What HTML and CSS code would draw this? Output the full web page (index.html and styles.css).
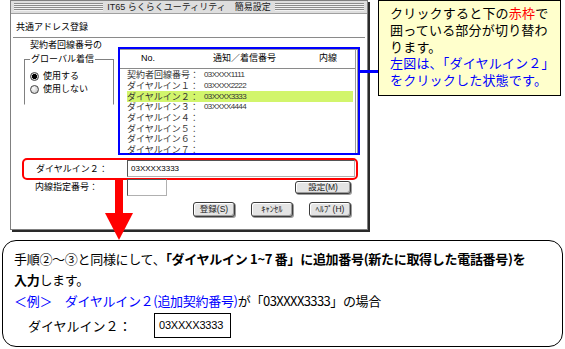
FILE: index.html
```html
<!DOCTYPE html>
<html lang="ja">
<head>
  <meta charset="UTF-8">
  <title>共通アドレス登録</title>
  <link rel="stylesheet" href="styles.css">
</head>
<body>
  <div class="page">
    <div class="top">
      <div class="window">
        <div class="titlebar">
          <span class="stripes"></span>
          <span class="title">IT65 らくらくユーティリティ　簡易設定</span>
          <span class="stripes"></span>
        </div>
        <div class="heading">共通アドレス登録</div>
        <div class="main">
          <div class="global">
            <div class="global-caption">契約者回線番号の</div>
            <div class="group">
              <span class="group-title">グローバル着信</span>
              <div class="radio"><span class="dot on"></span>使用する</div>
              <div class="radio"><span class="dot"></span>使用しない</div>
            </div>
          </div>
          <div class="list-frame">
            <div class="list">
              <div class="list-head">
                <span class="col-no">No.</span>
                <span class="col-num">通知／着信番号</span>
                <span class="col-ext">内線</span>
              </div>
              <div class="list-rows">
                <div class="row"><span class="row-label">契約者回線番号：</span><span class="num">03XXXX1111</span></div>
                <div class="row"><span class="row-label">ダイヤルイン１：</span><span class="num">03XXXX2222</span></div>
                <div class="row selected"><span class="row-label">ダイヤルイン２：</span><span class="num">03XXXX3333</span></div>
                <div class="row"><span class="row-label">ダイヤルイン３：</span><span class="num">03XXXX4444</span></div>
                <div class="row"><span class="row-label">ダイヤルイン４：</span></div>
                <div class="row"><span class="row-label">ダイヤルイン５：</span></div>
                <div class="row"><span class="row-label">ダイヤルイン６：</span></div>
                <div class="row"><span class="row-label">ダイヤルイン７：</span></div>
              </div>
            </div>
          </div>
        </div>
        <div class="edit-row">
          <span class="edit-label">ダイヤルイン２：</span>
          <span class="field wide">03XXXX3333</span>
        </div>
        <div class="ext-row">
          <span class="ext-label">内線指定番号：</span>
          <span class="field small"></span>
          <span class="btn set-btn">設定(M)</span>
        </div>
        <div class="btn-row">
          <span class="btn">登録(S)</span>
          <span class="btn">ｷｬﾝｾﾙ</span>
          <span class="btn">ﾍﾙﾌﾟ(H)</span>
        </div>
      </div>
      <div class="callout">
        クリックすると下の<span class="red">赤枠</span>で<br>
        囲っている部分が切り替わ<br>
        ります。<br>
        <span class="blue">左図は、「ダイヤルイン２」<br>
        をクリックした状態です。</span>
      </div>
    </div>

    <div class="note">
      <div class="note-line">手順②～③と同様にして、<b>「ダイヤルイン 1~7 番」に追加番号(新たに取得した電話番号)を</b></div>
      <div class="note-line"><b>入力</b>します。</div>
      <div class="note-line"><span class="blue">＜例＞　ダイヤルイン２(追加契約番号)</span>が「<span class="narrow">03XXXX3333</span>」の場合</div>
      <div class="example">
        <span class="example-label">ダイヤルイン２：</span>
        <span class="example-field">03XXXX3333</span>
      </div>
    </div>

    <div class="connector"></div>
    <svg class="arrow" width="28" height="61" viewBox="0 0 28 61">
      <rect x="10" y="0" width="8" height="35" fill="#ff0000"/>
      <polygon points="0,33 28,33 14,60" fill="#ff0000"/>
    </svg>
  </div>
</body>
</html>
```

FILE: styles.css
```css
body {
  margin: 0;
  background-color: #ffffff;
  color: #000000;
  font-family: "Noto Sans CJK JP", "DejaVu Sans", sans-serif;
}

.page {
  position: relative;
  width: 565px;
  height: 349px;
  overflow: hidden;
}

.top {
  display: flex;
  align-items: flex-start;
}

/* dialog window */
.window {
  margin-left: 10px;
  width: 358px;
  height: 230px;
  box-sizing: border-box;
  border: 1px solid #808080;
  box-shadow: 2px 2px 0 #2a2a2a;
  background-color: #ffffff;
  font-family: "Liberation Sans", "Noto Sans CJK JP", sans-serif;
  font-size: 9px;
  display: flex;
  flex-direction: column;
}

.titlebar {
  height: 12px;
  background-color: #dedede;
  border-bottom: 1px solid #a0a0a0;
  display: flex;
  align-items: center;
  gap: 4px;
  padding: 0 3px;
}

.stripes {
  flex: 1;
  height: 8px;
  background: repeating-linear-gradient(#8c8c8c 0 1px, #f2f2f2 1px 2px);
}

.title {
  font-size: 9px;
  line-height: 12px;
  color: #222222;
  white-space: nowrap;
}

.heading {
  height: 23px;
  margin: 0 2px;
  padding-left: 3px;
  line-height: 27px;
  border-bottom: 1px solid #8a8a8a;
}

.main {
  display: flex;
  align-items: flex-start;
  padding-left: 13px;
}

.global {
  width: 90px;
}

.global-caption {
  padding-left: 6px;
  margin-top: 1px;
  line-height: 12px;
}

.group {
  margin-top: 8px;
  height: 44px;
  border: 1px solid #808080;
  border-bottom-color: transparent;
  padding-left: 5px;
}

.group-title {
  display: inline-block;
  margin-top: -7px;
  padding: 0 1px;
  background-color: #ffffff;
  line-height: 12px;
  vertical-align: top;
}

.radio {
  display: flex;
  align-items: center;
  gap: 4px;
  line-height: 13px;
}

.dot {
  width: 7px;
  height: 7px;
  border: 1px solid #444444;
  border-radius: 50%;
  background: radial-gradient(circle at 35% 35%, #ffffff, #b8b8b8);
}

.dot.on {
  background: radial-gradient(circle, #000000 0 45%, #d0d0d0 55%);
}

.list-frame {
  margin-left: 4px;
  margin-top: 9px;
  width: 242px;
  height: 108px;
  box-sizing: border-box;
  border: 2px solid #0000ff;
}

.list {
  height: 104px;
  box-sizing: border-box;
  border-top: 1px solid #9a9a9a;
  border-right: 3px double #9a9a9a;
}

.list-head {
  height: 18px;
  line-height: 17px;
  border-bottom: 1px solid #8a8a8a;
  display: flex;
}

.col-no {
  margin-left: 21px;
  width: 72px;
}

.col-num {
  width: 106px;
}

.list-rows {
  padding-top: 1px;
  margin-left: 7px;
  margin-right: 2px;
}

.row {
  display: flex;
  align-items: center;
  height: 10.7px;
  line-height: 10px;
  color: #333333;
}

.row.selected {
  background-color: #d2f56c;
}

.row-label {
  width: 77px;
  white-space: nowrap;
}

.num {
  font-size: 8px;
  letter-spacing: -0.6px;
}

.edit-row {
  margin: 3px 9px 0 11px;
  height: 22px;
  box-sizing: border-box;
  border: 2px solid #ff0000;
  border-radius: 5px;
  display: flex;
  align-items: flex-start;
}

.edit-label {
  width: 91px;
  padding-left: 12px;
  line-height: 18px;
}

.field {
  box-sizing: border-box;
  height: 17px;
  border: 1px solid #b0b0b0;
  border-top-color: #555555;
  border-left-color: #555555;
  background-color: #ffffff;
  font-size: 8px;
  line-height: 15px;
  padding-left: 3px;
}

.field.wide {
  flex: 1;
  margin-right: 1px;
}

.field.small {
  width: 40px;
}

.ext-row {
  margin-top: -1px;
  display: flex;
  align-items: flex-start;
  padding-left: 24px;
  padding-right: 16px;
}

.ext-label {
  width: 92px;
  line-height: 17px;
}

.btn {
  box-sizing: border-box;
  height: 13px;
  border: 1px solid #3c3c3c;
  border-radius: 3px;
  background-color: #e4e4e4;
  box-shadow: inset 1px 1px 0 #ffffff, inset -1px -1px 0 #9c9c9c, 1px 1px 0 #9c9c9c;
  font-size: 8.5px;
  line-height: 11px;
  text-align: center;
  color: #222222;
}

.set-btn {
  margin-left: auto;
  margin-top: 2px;
  width: 56px;
}

.btn-row {
  margin-top: 6px;
  display: flex;
  justify-content: flex-end;
  gap: 16px;
  padding-right: 16px;
}

.btn-row .btn {
  width: 42px;
  height: 15px;
  line-height: 13px;
}

/* yellow note */
.callout {
  margin-left: 10px;
  width: 183px;
  height: 96px;
  box-sizing: border-box;
  border: 1px solid #000000;
  background-color: #ffffcc;
  padding: 5px 0 0 11px;
  font-family: "Liberation Sans", "Noto Sans CJK JP", sans-serif;
  font-size: 13px;
  line-height: 16.75px;
  letter-spacing: 0.2px;
  white-space: nowrap;
}

.red {
  color: #ff0000;
}

.blue {
  color: #0000ff;
}

/* bottom explanation */
.note {
  margin: 10px 0 0 2px;
  width: 561px;
  height: 107px;
  box-sizing: border-box;
  border: 1px solid #000000;
  border-radius: 14px;
  padding: 7px 0 0 11px;
  font-size: 13px;
  line-height: 21px;
  letter-spacing: -0.3px;
  white-space: nowrap;
}

.note b {
  font-weight: 700;
}

.narrow {
  letter-spacing: -0.6px;
}

.example {
  display: flex;
  align-items: center;
  margin-top: 2px;
  padding-left: 14px;
  letter-spacing: 0;
}

.example-label {
  width: 126px;
}

.example-field {
  width: 77px;
  height: 25px;
  box-sizing: border-box;
  border: 1px solid #000000;
  padding-left: 4px;
  font-family: "Liberation Sans", sans-serif;
  font-size: 11px;
  letter-spacing: -0.2px;
  line-height: 23px;
}

.connector {
  position: absolute;
  left: 360px;
  top: 70px;
  width: 18px;
  height: 3px;
  background-color: #0000ff;
}

.arrow {
  position: absolute;
  left: 105px;
  top: 180px;
}
```
